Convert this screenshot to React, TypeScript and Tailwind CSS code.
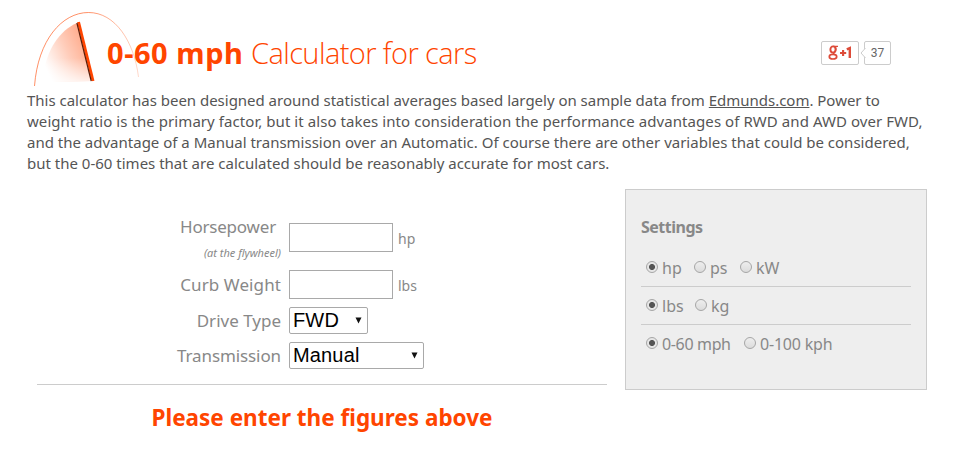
import { useState } from "react";
import type { ReactNode } from "react";
import clsx from "clsx";

const GaugeLogo = () => (
  <svg width="110" height="78" viewBox="0 0 110 78" fill="none">
    <defs>
      <linearGradient id="sweep" x1="62" y1="34" x2="14" y2="56" gradientUnits="userSpaceOnUse">
        <stop offset="0" stopColor="#ff4500" stopOpacity="0.5" />
        <stop offset="0.5" stopColor="#ff4500" stopOpacity="0.27" />
        <stop offset="1" stopColor="#ff4500" stopOpacity="0" />
      </linearGradient>
      <linearGradient id="fade" x1="0" y1="50" x2="0" y2="74" gradientUnits="userSpaceOnUse">
        <stop offset="0" stopColor="#fff" stopOpacity="0" />
        <stop offset="1" stopColor="#fff" stopOpacity="0.75" />
      </linearGradient>
      <linearGradient id="rim" x1="4" y1="0" x2="109" y2="0" gradientUnits="userSpaceOnUse">
        <stop offset="0" stopColor="#ff4500" stopOpacity="0.6" />
        <stop offset="0.5" stopColor="#ff4500" stopOpacity="0.6" />
        <stop offset="1" stopColor="#ff4500" stopOpacity="0.2" />
      </linearGradient>
    </defs>
    <path d="M4.5 78C8 32 32 4.5 58.5 4.5C85 4.5 104 33 108.5 69" stroke="url(#rim)" />
    <path d="M47 15C29 23 17 41 13 68L15 74L62 73Z" fill="url(#sweep)" />
    <path d="M47 15C29 23 17 41 13 68L15 74L62 73Z" fill="url(#fade)" />
    <path d="M48.5 14L63 73" stroke="#ff4500" strokeWidth="3" />
    <path d="M46.9 15L61.2 73" stroke="#5a1c08" strokeWidth="1.2" />
  </svg>
);

const PlusOne = () => (
  <div className="flex font-['Roboto',sans-serif]">
    <div className="flex h-6 w-[38px] items-center justify-center rounded-xs border border-[#ccc] bg-white text-[#dd4b39]">
      <svg width="24" height="18" viewBox="0 0 24 18" fill="none" stroke="currentColor">
        <ellipse cx="5" cy="5.5" rx="2.6" ry="3.1" strokeWidth="1.9" />
        <path d="M5 2.3H10M7.5 3C8.6 6 7.5 7.5 6 8.5C4.5 9.6 6 10.2 7.5 11.2" strokeWidth="1.3" />
        <ellipse cx="5" cy="12.7" rx="3.7" ry="2.3" strokeWidth="1.7" />
        <path d="M12 9H18.2M15.1 6V12" strokeWidth="2.1" />
        <path d="M18.8 5.3L21.8 4V14" strokeWidth="2.4" />
      </svg>
    </div>
    <div className="relative ml-[5px] flex h-6 w-[27px] items-center justify-center rounded-xs border border-[#ccc] bg-white text-xs text-[#666]">
      <svg className="absolute top-[6px] -left-[5px]" width="6" height="10" viewBox="0 0 6 10">
        <path d="M5.5 0L1 5L5.5 10" fill="#fff" stroke="#ccc" />
      </svg>
      37
    </div>
  </div>
);

interface DropdownProps {
  options: string[];
  className: string;
}

const Dropdown = ({ options, className }: DropdownProps) => (
  <div className={clsx("relative h-[27px]", className)}>
    <select className="h-full w-full appearance-none rounded-xs border border-[#a9a9a9] bg-white pl-[3px] pb-px font-['Liberation_Sans',sans-serif] text-xl leading-none tracking-[0.15px] text-black">
      {options.map((option) => (
        <option key={option}>{option}</option>
      ))}
    </select>
    <svg className="pointer-events-none absolute top-[10px] right-[6px]" width="7" height="7" viewBox="0 0 7 7">
      <path d="M0.5 0.5H6.5L3.5 6.5Z" fill="#111" />
    </svg>
  </div>
);

interface RadioProps {
  label: string;
  name: string;
  value: string;
  onSelect: (value: string) => void;
  className?: string;
}

const Radio = ({ label, name, value, onSelect, className }: RadioProps) => (
  <label className={clsx("flex whitespace-nowrap", className)}>
    <input
      type="radio"
      name={name}
      checked={value === label}
      onChange={() => onSelect(label)}
      className="mt-[4px] mr-[4px] size-3 shrink-0 appearance-none rounded-full border border-[#a6a6a6] bg-linear-to-b from-[#eee] to-[#dcdcdc] checked:bg-[radial-gradient(circle,#555_2.6px,#e6e6e6_3.4px)]"
    />
    {label}
  </label>
);

const SettingRow = ({ children, last }: { children: ReactNode; last?: boolean }) => (
  <div className={clsx("flex h-[38px] pt-[8px] pl-[5px] leading-[22px]", !last && "border-b border-[#ccc]")}>
    {children}
  </div>
);

const Settings = () => {
  const [power, setPower] = useState("hp");
  const [weight, setWeight] = useState("lbs");
  const [speed, setSpeed] = useState("0-60 mph");

  return (
    <aside className="h-[201px] w-[302px] shrink-0 border border-[#ccc] bg-[#eee] px-[15px] pt-[26px] text-base text-[#888]">
      <h2 className="text-base leading-[22px] font-bold tracking-[-0.5px]">Settings</h2>
      <div className="pt-[11px]">
        <SettingRow>
          <Radio label="hp" name="power" value={power} onSelect={setPower} className="w-[48px]" />
          <Radio label="ps" name="power" value={power} onSelect={setPower} className="w-[46px]" />
          <Radio label="kW" name="power" value={power} onSelect={setPower} />
        </SettingRow>
        <SettingRow>
          <Radio label="lbs" name="weight" value={weight} onSelect={setWeight} className="w-[49px]" />
          <Radio label="kg" name="weight" value={weight} onSelect={setWeight} />
        </SettingRow>
        <SettingRow last>
          <Radio label="0-60 mph" name="speed" value={speed} onSelect={setSpeed} className="w-[98px] tracking-[-0.35px]" />
          <Radio label="0-100 kph" name="speed" value={speed} onSelect={setSpeed} className="tracking-[-0.2px]" />
        </SettingRow>
      </div>
    </aside>
  );
};

const CarForm = () => (
  <section className="w-[570px] shrink-0">
    <div className="h-[196px] border-b border-[#ccc] text-[17px] text-[#888]">
      <div className="flex h-[81px] pt-[26px]">
        <div className="w-[244px] text-right">
          <div className="pr-[5px] leading-[24px] tracking-[-0.2px]">Horsepower</div>
          <div className="pt-[6px] text-[11px] leading-4 italic">(at the flywheel)</div>
        </div>
        <input className="mt-[8px] ml-2 h-[29px] w-[104px] border border-[#a9a9a9] bg-white px-1 text-black" />
        <span className="pt-[14px] pl-[5px] text-sm leading-5">hp</span>
      </div>
      <div className="flex h-[37px]">
        <div className="w-[244px] pt-[3px] text-right leading-[24px] tracking-[0.1px]">Curb Weight</div>
        <input className="ml-2 h-[29px] w-[104px] border border-[#a9a9a9] bg-white px-1 text-black" />
        <span className="pt-[6px] pl-[5px] text-sm leading-5">lbs</span>
      </div>
      <div className="flex h-[35px]">
        <div className="w-[244px] pt-[2px] text-right leading-[24px]">Drive Type</div>
        <Dropdown options={["FWD", "RWD", "AWD"]} className="ml-2 w-[79px]" />
      </div>
      <div className="flex">
        <div className="w-[244px] pt-[2px] text-right leading-[24px] tracking-[-0.1px]">Transmission</div>
        <Dropdown options={["Manual", "Automatic"]} className="ml-2 w-[135px]" />
      </div>
    </div>
    <p className="pt-[17px] text-center text-[22.5px] leading-[32px] font-bold text-[#ff4500]">
      Please enter the figures above
    </p>
  </section>
);

export default function App() {
  return (
    <main className="h-[467px] w-[958px] overflow-hidden bg-white font-['Noto_Sans','Open_Sans',sans-serif]">
      <header className="flex h-[90px] pt-2 pl-[30px]">
        <GaugeLogo />
        <h1 className="-ml-[33px] w-[714px] pt-[25px] text-[29px] leading-[40px] whitespace-nowrap text-[#ff4500]">
          <span className="font-bold tracking-[0.55px]">0-60 mph</span>{" "}
          <span className="font-['Open_Sans',sans-serif] font-light tracking-[-0.58px]">Calculator for cars</span>
        </h1>
        <div className="pt-[33px]">
          <PlusOne />
        </div>
      </header>
      <div className="h-[99px] pl-[27px] text-[15px] leading-[21px] whitespace-nowrap text-[#555]">
        <p className="tracking-[-0.02px]">
          This calculator has been designed around statistical averages based largely on sample data from{" "}
          <a href="#" className="underline">Edmunds.com</a>. Power to
        </p>
        <p className="tracking-[0.065px]">
          weight ratio is the primary factor, but it also takes into consideration the performance advantages of RWD and AWD over FWD,
        </p>
        <p>and the advantage of a Manual transmission over an Automatic. Of course there are other variables that could be considered,</p>
        <p>but the 0-60 times that are calculated should be reasonably accurate for most cars.</p>
      </div>
      <div className="flex gap-[18px] pl-[37px]">
        <CarForm />
        <Settings />
      </div>
    </main>
  );
}
